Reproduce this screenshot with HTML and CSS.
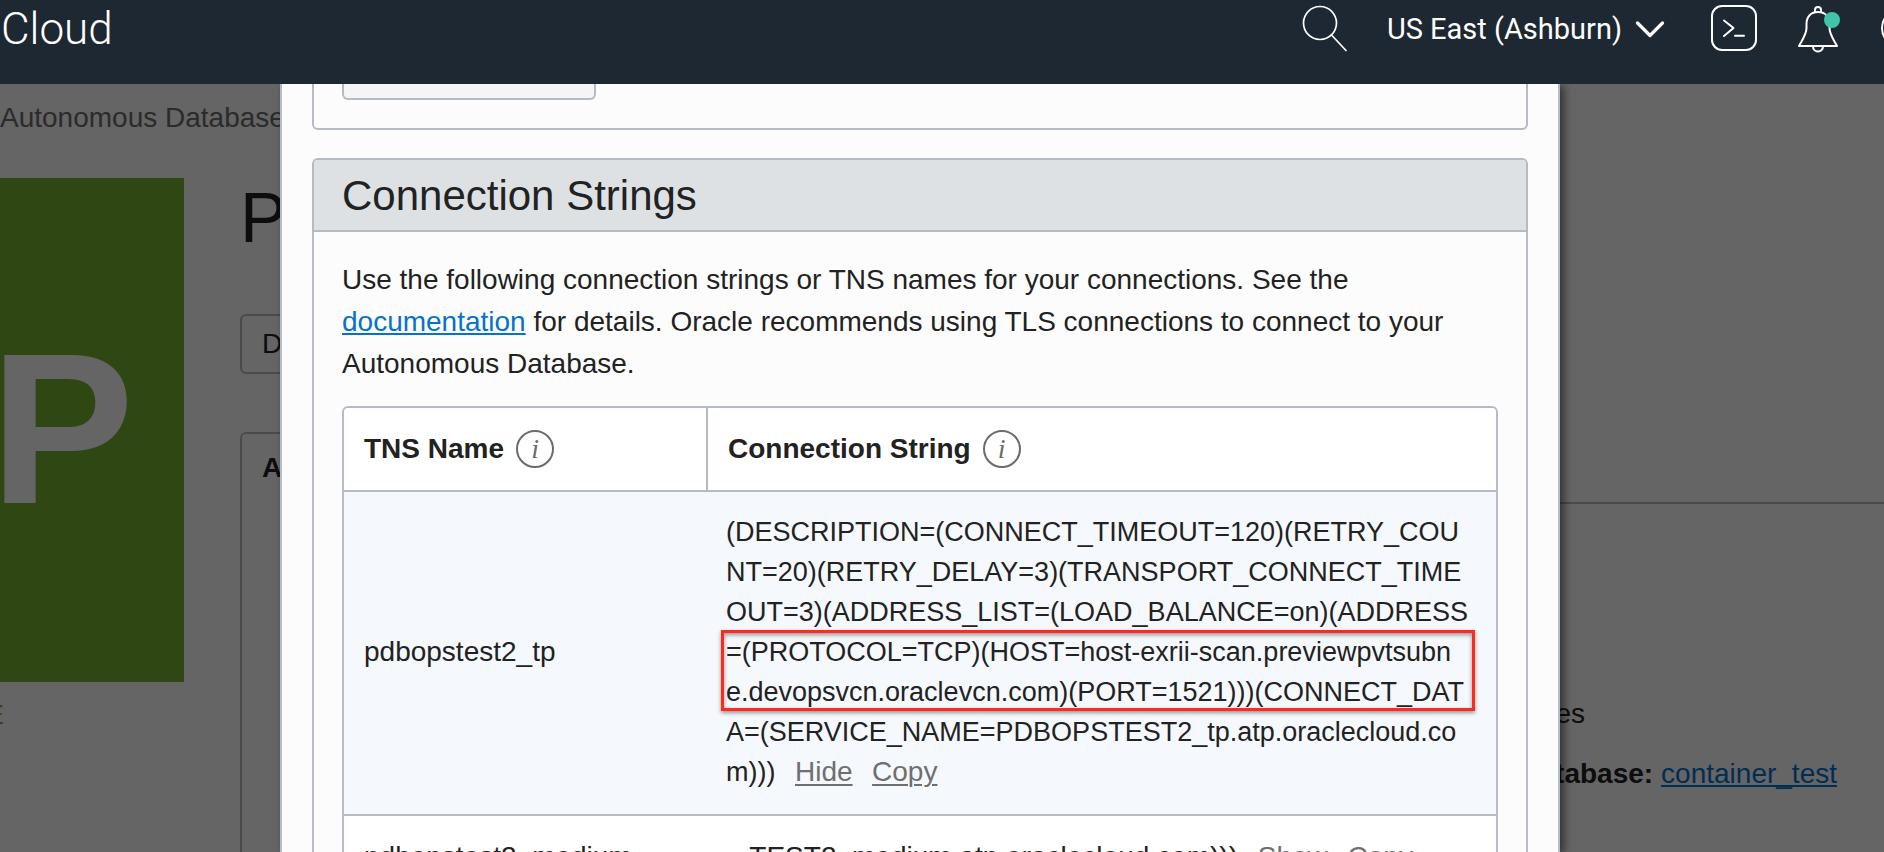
FILE: index.html
```
<!DOCTYPE html>
<html lang="en">
<head>
<meta charset="utf-8">
<title>Cloud</title>
<link rel="stylesheet" href="styles.css">
</head>
<body>
<header class="topbar">
  <div class="brand">Cloud</div>
  <nav class="tools">
    <button class="tool" aria-label="Search">
      <svg width="46" height="48" viewBox="0 0 46 48"><g fill="none" stroke="#fff" stroke-width="1.7" stroke-linecap="round"><circle cx="19" cy="19" r="16.500"/><path d="M30.500 31 45 46.500"/></g></svg>
    </button>
    <button class="tool region">US East (Ashburn)
      <svg width="30" height="18" viewBox="0 0 30 18"><path d="M2.500 3 15 15.500 27.500 3" fill="none" stroke="#fff" stroke-width="3.200" stroke-linecap="round" stroke-linejoin="round"/></svg>
    </button>
    <button class="tool" aria-label="Cloud Shell">
      <svg width="46" height="46" viewBox="0 0 46 46"><g fill="none" stroke="#fff" stroke-width="2" stroke-linecap="round" stroke-linejoin="round"><rect x="1" y="1" width="44" height="44" rx="10"/><path d="M13 15.500 22.500 23 13 31M24 30.800h9"/></g></svg>
    </button>
    <button class="tool" aria-label="Notifications">
      <svg width="44" height="50" viewBox="0 0 44 50"><g fill="none" stroke="#fff" stroke-width="2" stroke-linejoin="round"><path d="M2 43C5 37 9.500 31.500 9.500 25v-4C9.500 13.500 14 9 21 9s11.500 4.500 11.500 12v4c0 6.500 4.500 12 7.500 18z"/><path d="M18 9V7a3 3 0 0 1 6 0v2M16 43.500a5 5 0 0 0 10 0"/></g><circle cx="35" cy="17" r="8" fill="#41c4a8"/></svg>
    </button>
    <button class="tool" aria-label="Help">
      <svg width="40" height="40" viewBox="0 0 40 40"><circle cx="20" cy="20" r="19" fill="none" stroke="#fff" stroke-width="2"/></svg>
    </button>
  </nav>
</header>
<main class="stage">
  <div class="page">
    <div class="crumb">Autonomous Database</div>
    <div class="columns">
      <aside class="identity">
        <div class="tile">P</div>
        <div class="state">E</div>
      </aside>
      <section class="details">
        <h1 class="name">P</h1>
        <button class="action">D</button>
        <div class="tabs"><div class="tab">A</div></div>
        <div class="facts">
          <p class="fact answer">Yes</p>
          <p class="fact"><b>Database:</b> <a class="link" href="#">container_test</a></p>
        </div>
      </section>
    </div>
  </div>
  <div class="dialog" role="dialog" aria-labelledby="strings-title">
    <section class="wallet"><button class="download" aria-label="Download wallet"></button></section>
    <section class="card">
      <h2 class="card-title" id="strings-title">Connection Strings</h2>
      <div class="card-body">
        <p class="intro">Use the following connection strings or TNS names for your connections. See the <a class="link" href="#">documentation</a> for details. Oracle recommends using TLS connections to connect to your Autonomous Database.</p>
        <table class="strings">
          <thead>
            <tr>
              <th class="tns"><div class="head">TNS Name <button class="info">i</button></div></th>
              <th><div class="head">Connection String <button class="info">i</button></div></th>
            </tr>
          </thead>
          <tbody>
            <tr class="open">
              <td>pdbopstest2_tp</td>
              <td>
                <div class="string">(DESCRIPTION=(CONNECT_TIMEOUT=120)(RETRY_COU<br>NT=20)(RETRY_DELAY=3)(TRANSPORT_CONNECT_TIME<br>OUT=3)(ADDRESS_LIST=(LOAD_BALANCE=on)(ADDRESS<br>=(PROTOCOL=TCP)(HOST=host-exrii-scan.previewpvtsubn<br>e.devopsvcn.oraclevcn.com)(PORT=1521)))(CONNECT_DAT<br>A=(SERVICE_NAME=PDBOPSTEST2_tp.atp.oraclecloud.co<br>m))) <a class="quiet" href="#">Hide</a> <a class="quiet" href="#">Copy</a><span class="mark"></span></div>
              </td>
            </tr>
            <tr class="closed">
              <td>pdbopstest2_medium</td>
              <td>...TEST2_medium.atp.oraclecloud.com))) <a class="quiet" href="#">Show</a> <a class="quiet" href="#">Copy</a></td>
            </tr>
          </tbody>
        </table>
      </div>
    </section>
  </div>
</main>
</body>
</html>
```
FILE: styles.css
```
* { box-sizing: border-box; }
body {
  margin: 0;
  height: 100vh;
  display: flex;
  flex-direction: column;
  overflow: hidden;
  font: 28px/42px "Liberation Sans", Arial, sans-serif;
  color: #222;
  background: #fcfcfc;
}
h1, h2, p { margin: 0; font-weight: 400; }
button { font: inherit; color: inherit; background: none; border: 0; padding: 0; margin: 0; }

.topbar {
  flex: none;
  display: flex;
  justify-content: space-between;
  height: 84px;
  background: #1e2832;
  color: #fff;
  overflow: hidden;
  font-family: Roboto, sans-serif;
}
.brand { padding-left: 1px; font-size: 44px; font-weight: 300; line-height: 58px; }
.tools { display: flex; align-items: center; gap: 40px; height: 56px; margin-right: -37px; }
.tool { display: flex; align-items: center; flex: none; }
.tool svg { display: block; }
.region { gap: 13px; font-size: 29px; padding: 2px 6px 0 0; }

.stage { position: relative; flex: 1; min-height: 0; overflow: hidden; }
.page { height: 100%; padding-top: 13px; overflow: hidden; }
.page::after { content: ""; position: absolute; inset: 0; background: rgba(0, 0, 0, .6); }
.crumb { color: #6b6b6b; }
.columns { display: grid; grid-template-columns: 184px 1fr; gap: 56px; padding-top: 39px; }
.tile {
  height: 504px;
  display: flex;
  align-items: center;
  justify-content: flex-end;
  padding: 0 50px 4px 0;
  background: #76b230;
  color: #fcfcfc;
  font-size: 216px;
  font-weight: 700;
}
.state { display: flex; justify-content: flex-end; padding: 12px 180px 0 0; color: #76b230; }
.details { display: flex; flex-direction: column; align-items: flex-start; }
.name { font-size: 70px; line-height: 80px; }
.action { width: 254px; height: 60px; margin-top: 56px; padding: 0 20px; border: 2px solid #b4bbc4; border-radius: 6px; text-align: left; }
.tabs { align-self: stretch; display: flex; margin-top: 58px; }
.tabs::after { content: ""; flex: 1; border-bottom: 2px solid #b4bbc4; }
.tab { width: 480px; height: 72px; padding: 13px 20px; border: 2px solid #b4bbc4; border-bottom: 0; border-radius: 6px 6px 0 0; font-weight: 700; }
.facts { align-self: stretch; height: 400px; padding: 189px 47px 0 0; border-left: 2px solid #b4bbc4; }
.fact { display: flex; justify-content: flex-end; gap: 8px; margin-bottom: 18px; }
.answer { padding-right: 252px; }

.dialog {
  position: absolute;
  inset: 0 324px 0 280px;
  padding: 0 30px;
  border: solid #b4bbc8;
  border-width: 0 2px;
  background: #fcfcfc;
  box-shadow: 4px 2px 8px rgba(0, 0, 0, .5);
  overflow: hidden;
}
.wallet, .card { border: 2px solid #b4bbc4; }
.wallet { border-top: 0; border-radius: 0 0 6px 6px; padding: 0 28px 28px; }
.download { display: block; width: 254px; height: 16px; background: #f5f5f5; border: 2px solid #b4bbc4; border-top: 0; border-radius: 0 0 6px 6px; }
.card { margin-top: 28px; border-radius: 6px; }
.card-title { padding: 2px 28px 0; background: #dee1e4; border-bottom: 2px solid #b4bbc4; border-radius: 4px 4px 0 0; font-size: 42px; line-height: 68px; }
.card-body { padding: 27px 28px; }
.link { color: #0572ce; text-decoration: underline; text-decoration-thickness: 2px; text-underline-offset: 2px; text-decoration-skip-ink: none; }

.strings { width: 100%; margin-top: 21px; border: 2px solid #b4bbc4; border-radius: 6px; border-spacing: 0; background: #fff; line-height: 40px; table-layout: fixed; }
.strings th { padding: 0 20px; height: 84px; border-bottom: 2px solid #b4bbc4; text-align: left; }
.strings th + th { border-left: 2px solid #b4bbc4; }
.tns { width: 362px; }
.head { display: flex; align-items: center; gap: 12px; }
.info { width: 38px; height: 38px; border: 2px solid #6b6b6b; border-radius: 50%; color: #6b6b6b; font: italic 28px/32px "Liberation Serif", serif; text-align: center; }
.strings td { padding: 20px 20px 22px; vertical-align: middle; white-space: nowrap; }
.strings .closed td { padding-top: 21px; }
.open td { background: #f5f8fd; border-bottom: 2px solid #b4bbc4; }
.string { position: relative; font-size: 27px; }
.quiet { margin-left: 12px; color: #6f6f6f; font-size: 28px; text-decoration: underline; text-decoration-thickness: 2px; text-underline-offset: 3px; }
.mark { position: absolute; top: 118px; left: -5px; right: 1px; height: 81px; border: 3px solid #fb2c1c; box-shadow: 0 2px 4px rgba(0, 0, 0, .4), inset 0 2px 4px rgba(0, 0, 0, .4); }
```
